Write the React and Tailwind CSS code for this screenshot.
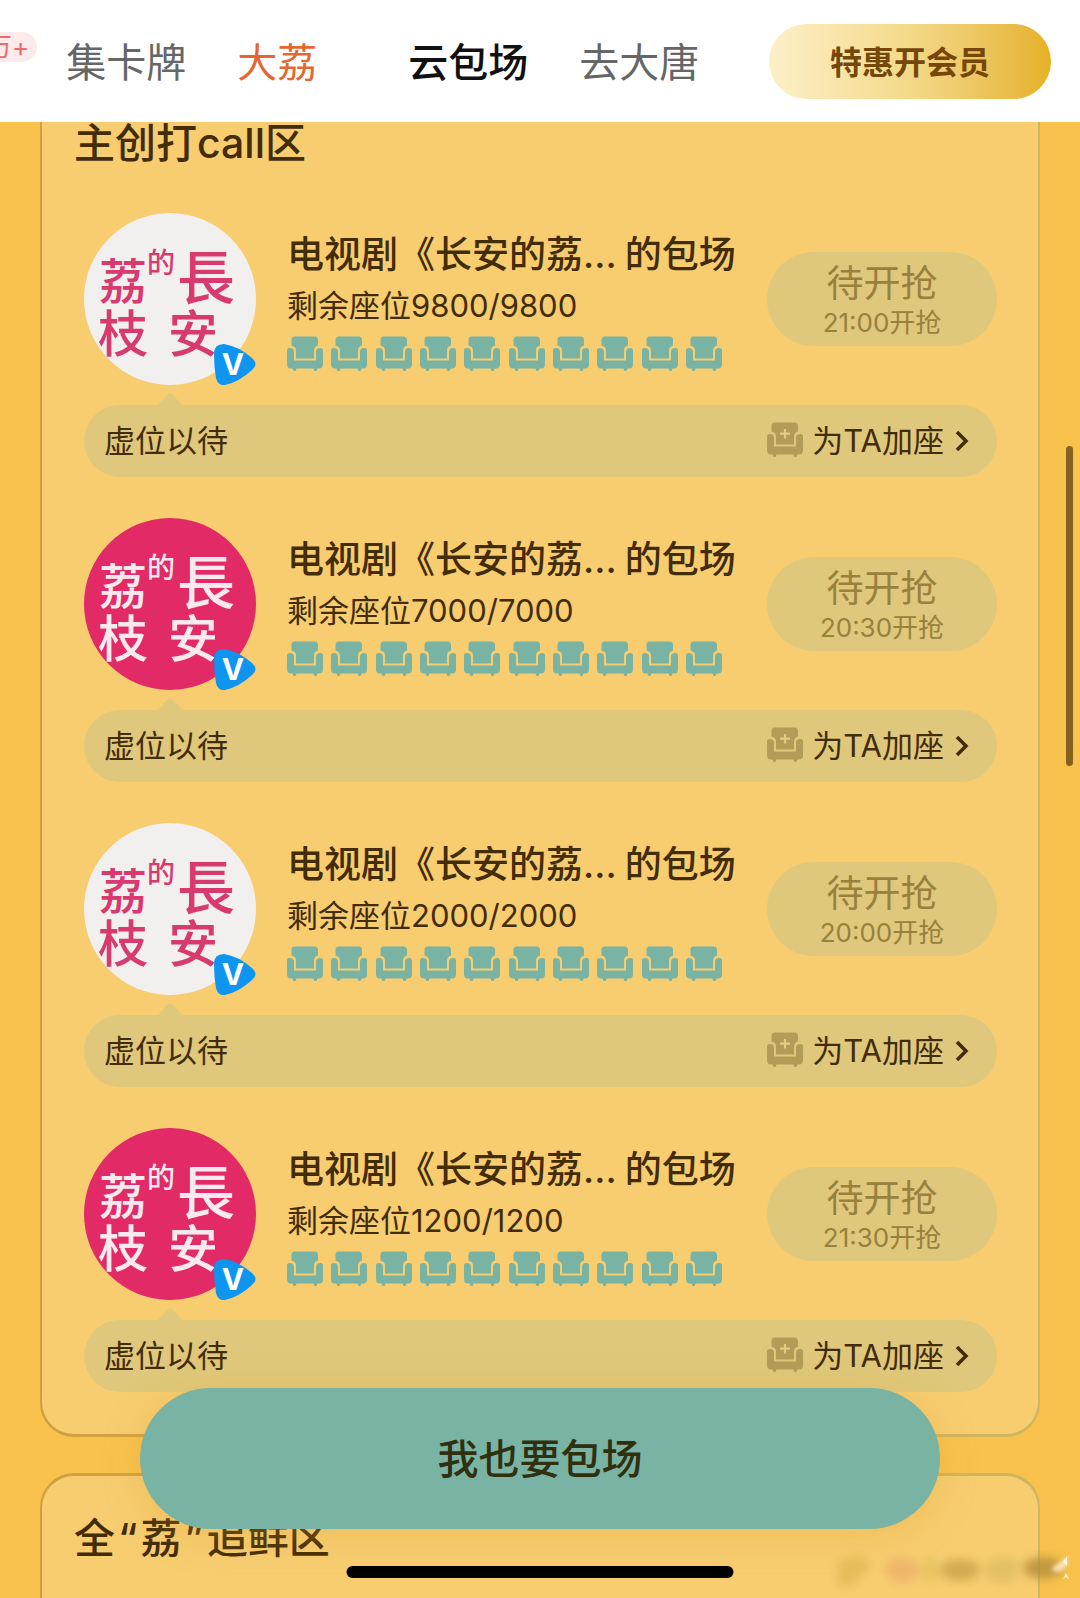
import { useState } from "react";
import clsx from "clsx";

const tabs = [
    { name: '集卡牌', className: 'text-[#666666]' },
    { name: '大荔', className: 'ml-[51px] text-[#e5672f]' },
    { name: '云包场', className: 'ml-[91px] font-medium text-[#111111]' },
    { name: '去大唐', className: 'ml-[51px] text-[#666666]' },
];

const rooms = [
    { id: 1, total: 9800, time: '21:00', pink: false },
    { id: 2, total: 7000, time: '20:30', pink: true },
    { id: 3, total: 2000, time: '20:00', pink: false },
    { id: 4, total: 1200, time: '21:30', pink: true },
];

function Seat({ className, plus }) {
    return (
        <svg className={className} viewBox="0 0 36 35" fill="currentColor" aria-hidden="true">
            <path d="M7.500 0.500H27.500Q31 0.500 31 4V9.500Q27 10.500 27 14.500V22.500H9V14.500Q9 10.500 4.500 9.500V4Q4.500 0.500 7.500 0.500Z" />
            <path d="M2.500 12Q7 12 7 16V24.500H29V16Q29 12 33.500 12Q36 12 36 14.500V28Q36 32.500 32 32.500H30.500L29.500 35H27.500L26.500 32.500H9.500L8.500 35H6.500L5.500 32.500H4Q0 32.500 0 28V14.500Q0 12 2.500 12Z" />
            {plus && <path d="M18 7V16.500M13 11.700H23" stroke="#e3cb80" strokeWidth="2.200" />}
        </svg>
    );
}

function Avatar({ pink }) {
    return (
        <svg className="size-[172px] shrink-0" viewBox="0 0 172 172" role="img" aria-label="长安的荔枝">
            <circle cx="86" cy="86" r="86" fill={pink ? '#e12a66' : '#f2f0ef'} />
            <g fill={pink ? '#fbe9ef' : '#d8396f'} className="font-['Noto_Sans_CJK_TC','Noto_Sans_CJK_SC',sans-serif] font-medium">
                <text x="15" y="86" fontSize="48">荔</text>
                <text x="63" y="60" fontSize="28">的</text>
                <text x="93" y="86" fontSize="58">長</text>
                <text x="14" y="139" fontSize="50">枝</text>
                <text x="84" y="139" fontSize="50">安</text>
            </g>
            <path d="M130 141Q130 131 140 131Q154 133 168 145Q175 151 168 157Q155 169 141 172Q134 173 132 165Q130 154 130 141Z" fill="#0e95f0" />
            <text x="149" y="162" fontSize="30" textAnchor="middle" fill="#ffffff" className="font-[Inter,sans-serif] font-bold">V</text>
        </svg>
    );
}

function Room({ room }) {
    return (
        <li>
            <div className="flex items-center">
                <Avatar pink={room.pink} />
                <div className="ml-[31px] mr-[30px] min-w-0 flex-1 self-stretch whitespace-nowrap pt-5">
                    <h3 className="flex gap-2 text-[37px] font-medium leading-[44px]">
                        <span>电视剧《长安的荔...</span>
                        <span>的包场</span>
                    </h3>
                    <p className="mt-[7px] text-[31px] leading-[44px]">剩余座位{room.total}/{room.total}</p>
                    <div className="mt-2 flex justify-between pr-[15px] text-[#78b3a3]">
                        {Array.from({ length: 10 }, (_, i) => <Seat key={i} className="h-[35px] w-9" />)}
                    </div>
                </div>
                <button type="button" className="flex h-[94px] w-[230px] shrink-0 flex-col items-center justify-center rounded-full bg-[#dfc87b] pt-[6px] text-[#98803d]">
                    <span className="text-[37px] leading-[42px]">待开抢</span>
                    <span className="text-[26px] leading-[36px]">{room.time}开抢</span>
                </button>
            </div>
            <div className="relative mt-5 flex h-[72px] items-center justify-between rounded-full bg-[#dfc87b] pl-5 pr-7 text-[31px]">
                <svg className="absolute -top-3 left-[74px] h-3 w-6" viewBox="0 0 24 12" aria-hidden="true">
                    <path d="M0 12L9 2Q12 -1 15 2L24 12Z" fill="#dfc87b" />
                </svg>
                <span>虚位以待</span>
                <button type="button" className="flex items-center">
                    <Seat plus className="mb-1 h-[35px] w-9 text-[#b39c58]" />
                    <span className="ml-[9px]">为TA加座</span>
                    <svg className="ml-[11px] h-6 w-[14px]" viewBox="0 0 14 24" fill="none" stroke="currentColor" strokeWidth="3.500" aria-hidden="true">
                        <path d="M2 3L11 12L2 21" />
                    </svg>
                </button>
            </div>
        </li>
    );
}

export default function App() {
    const [active, setActive] = useState('云包场');

    return (
        <div className="relative flex h-screen flex-col overflow-hidden bg-[#f8c24c] font-[Inter,'Noto_Sans_CJK_SC',sans-serif] text-[#432c08]">
            <header className="flex h-[122px] shrink-0 items-center bg-white pr-[29px]">
                <nav className="flex flex-1 items-center whitespace-nowrap text-[40px] leading-[56px]">
                    <span className="-ml-[22px] mr-[29px] -mt-[29px] rounded-full bg-[#fdebeb] pl-2 pr-2 text-[26px] leading-[30px] text-[#ec6a6c]">万+</span>
                    {tabs.map((tab) => (
                        <button
                            key={tab.name}
                            type="button"
                            aria-current={active === tab.name}
                            className={clsx('mt-1', tab.className)}
                            onClick={() => setActive(tab.name)}
                        >
                            {tab.name}
                        </button>
                    ))}
                </nav>
                <button type="button" className="h-[75px] w-[282px] shrink-0 rounded-full bg-linear-to-r from-[#fdf0c8] via-[#f3d988] to-[#e6b122] pt-1 text-[32px] font-bold text-[#75480a]">
                    特惠开会员
                </button>
            </header>

            <main className="flex-1 overflow-hidden px-10">
                <section className="rounded-b-[34px] bg-linear-to-r from-[#d0a03e] to-[#cdb661] px-[2px] pb-[3px]">
                    <div className="rounded-b-[32px] bg-[#f7cd70] pb-[42px] pl-[42px] pr-[41px]">
                        <h2 className="-ml-[10px] text-[41px] font-medium leading-[42px]">主创打call区</h2>
                        <ul className="mt-[49px] flex flex-col gap-[41px]">
                            {rooms.map((room) => <Room key={room.id} room={room} />)}
                        </ul>
                    </div>
                </section>
                <section className="mt-9 rounded-t-[34px] bg-linear-to-r from-[#d0a03e] to-[#cdb661] px-[2px] pt-[3px]">
                    <div className="h-40 rounded-t-[32px] bg-[#f7cd70] pl-8 pt-[42px]">
                        <h2 className="text-[41px] font-medium leading-10">
                            全<span className="px-[3px]">“</span>荔<span className="px-[3px]">”</span>追鲜区
                        </h2>
                    </div>
                </section>
            </main>

            {/* scroll thumb */}
            <div className="absolute right-[7px] top-[446px] h-[320px] w-[7px] rounded-full bg-[#84611f]" />

            <button type="button" className="absolute bottom-[69px] left-[13%] right-[13%] h-[141px] rounded-full bg-[#78b3a3] pt-[2px] text-[41px] font-medium text-[#30300f] shadow-[0_6px_36px_rgba(224,160,50,0.35)]">
                我也要包场
            </button>

            <svg className="absolute bottom-0 right-0 h-12 w-[250px]" viewBox="0 0 250 48" aria-hidden="true">
                <g className="opacity-80 blur-[5px]">
                    <path d="M8 10L30 5L42 16L22 36L7 37Z" fill="#e2b955" />
                    <ellipse cx="72" cy="20" rx="17" ry="12" fill="#eeb169" />
                    <ellipse cx="100" cy="20" rx="9" ry="13" fill="#e5c45d" />
                    <ellipse cx="130" cy="20" rx="20" ry="11" fill="#c9a34b" />
                    <ellipse cx="172" cy="20" rx="17" ry="13" fill="#dfbd63" />
                    <ellipse cx="213" cy="18" rx="20" ry="11" fill="#b58e3b" />
                </g>
                <path d="M237 7L221 19Q230 26 237 15Z" fill="#fbe7bb" className="blur-[2px]" />
                <path d="M237 6V16L233 12ZM236 23L233 29L236 27L239 29Z" fill="#fff6e0" />
            </svg>

            {/* home indicator */}
            <div className="absolute bottom-5 left-1/2 h-3 w-[387px] -translate-x-1/2 rounded-full bg-black" />
        </div>
    );
}
